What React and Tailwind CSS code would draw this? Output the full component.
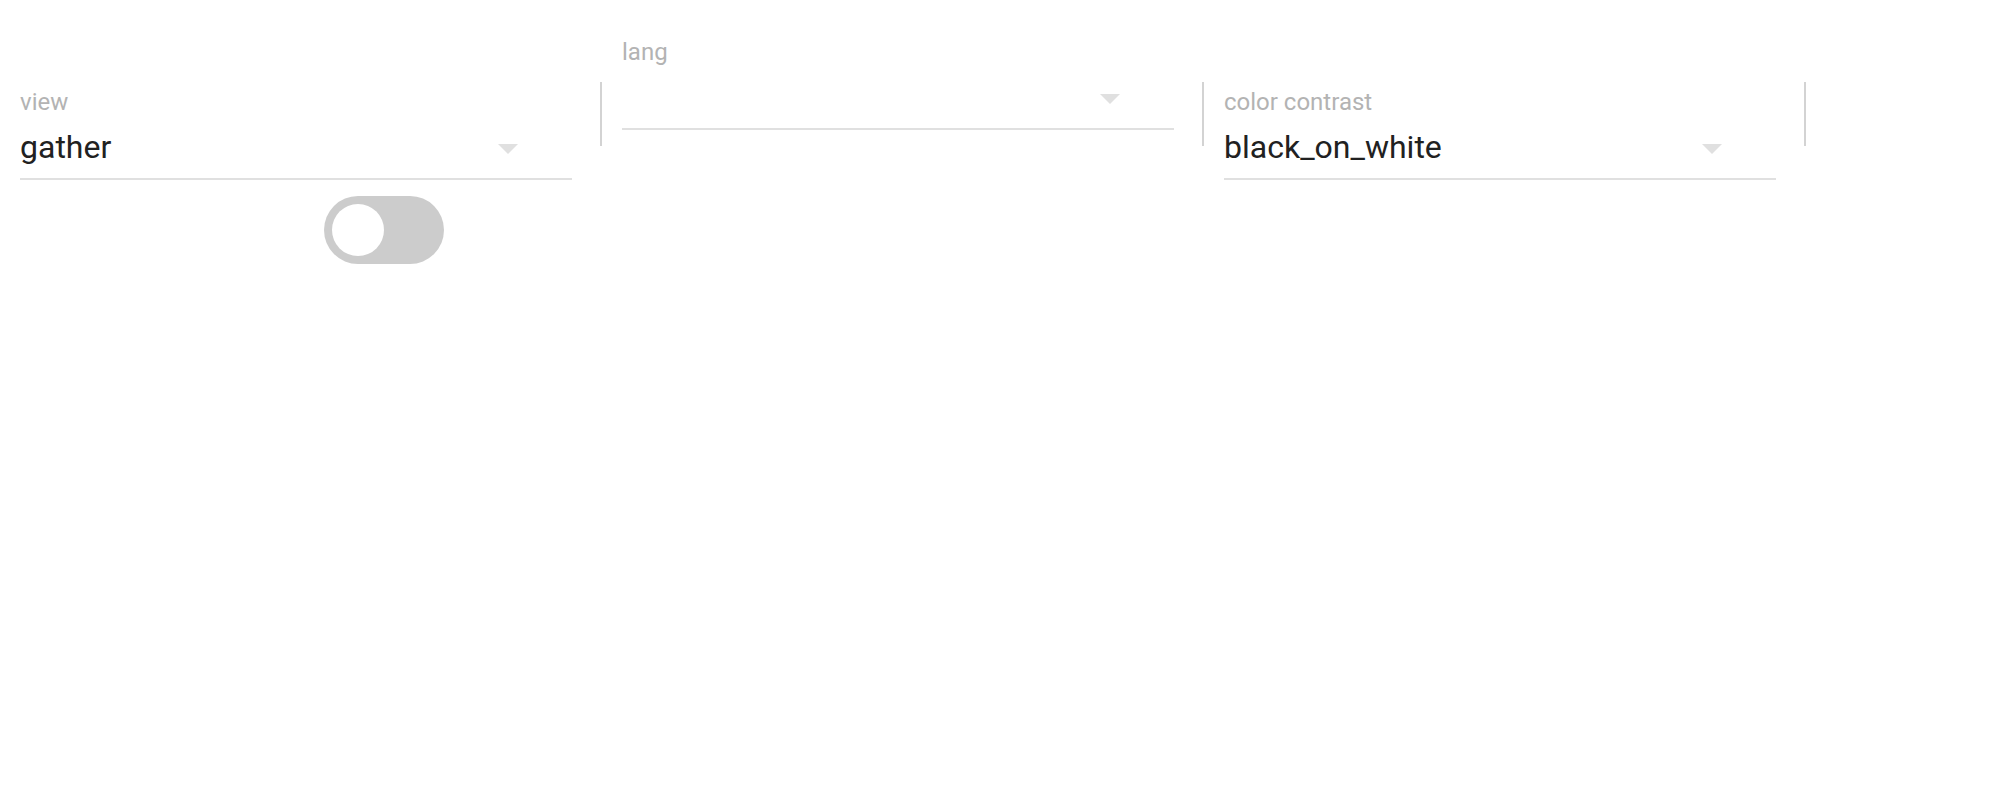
import React from "react";

function Arrow({ className }) {
  return (
    <svg width="20" height="10" viewBox="0 0 20 10" className={className}>
      <path d="M0 0 L20 0 L10 10 Z" fill="#e0e0e0" />
    </svg>
  );
}

function Field({ label, value, top, children }) {
  return (
    <div className="pl-[20px] pr-[28px]" style={{ paddingTop: top }}>
      <div className="w-[552px]">
        <div className="h-[24px] text-[24px] leading-[24px] text-[#b3b3b3]">{label}</div>
        <div className="mt-[16px] flex h-[32px] items-start">
          <div className="flex-1 pt-[1px] text-[32px] leading-[32px] text-[#212121] whitespace-nowrap">{value}</div>
          <Arrow className="mt-[14px] mr-[54px]" />
        </div>
        <div className="mt-[16px] h-[2px] bg-[#e0e0e0]" />
        {children}
      </div>
    </div>
  );
}

function Sep() {
  return <div className="mt-[82px] h-[64px] w-[2px] bg-[#d3d3d3]" />;
}

export default function App() {
  return (
    <div className="min-h-[808px] w-[2000px] bg-white" style={{ fontFamily: "Roboto, 'Noto Sans', sans-serif" }}>
      <div className="flex items-start">
        <Field label="view" value="gather" top={90}>
          <div className="mt-[16px] ml-[304px] flex h-[68px] w-[120px] items-center rounded-full bg-[#cccccc] pl-[8px]">
            <div className="h-[52px] w-[52px] rounded-full bg-white" />
          </div>
        </Field>
        <Sep />
        <Field label="lang" value="" top={40} />
        <Sep />
        <Field label="color contrast" value="black_on_white" top={90} />
        <Sep />
      </div>
    </div>
  );
}
